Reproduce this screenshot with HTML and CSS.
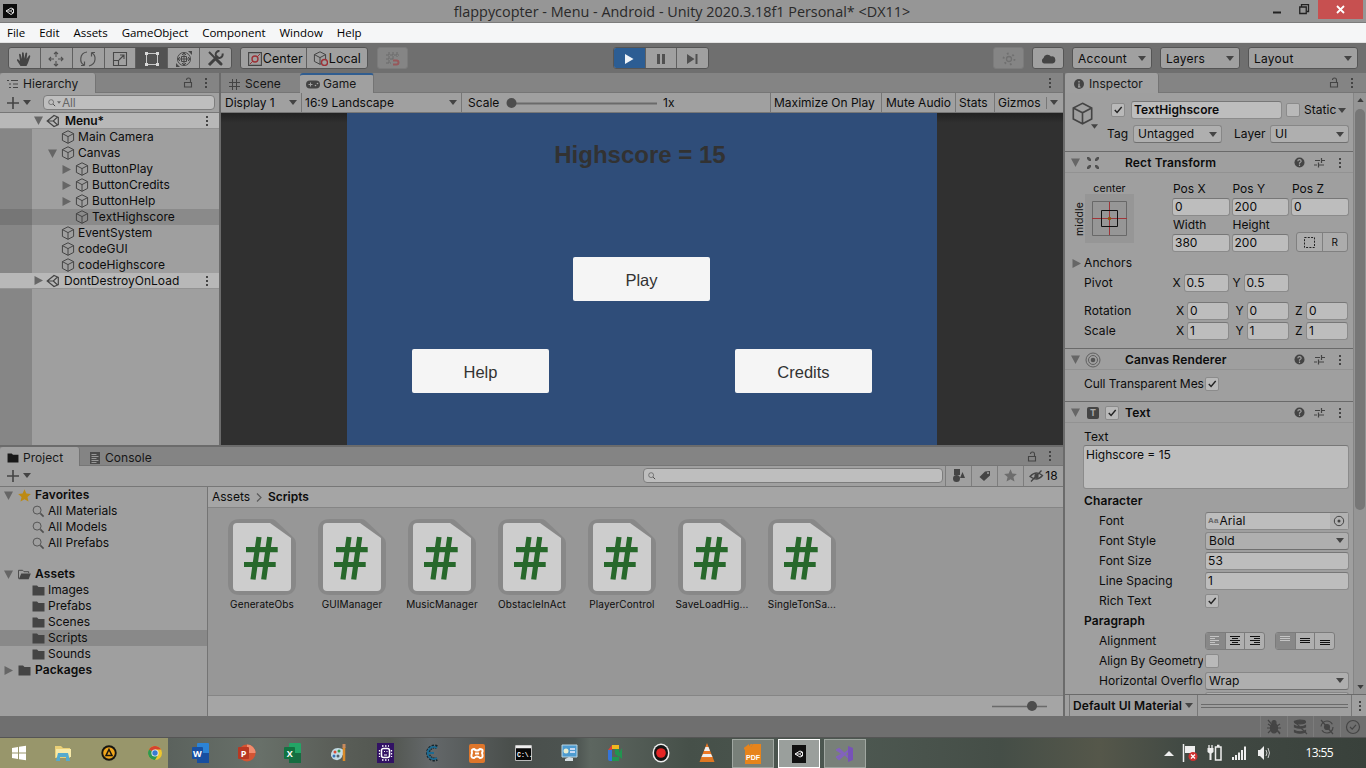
FILE: index.html
```html
<!DOCTYPE html>
<html lang="en">
<head>
<meta charset="utf-8">
<title>flappycopter - Menu - Android - Unity</title>
<link rel="stylesheet" href="styles.css">
</head>
<body>
<svg class="sprite" aria-hidden="true">
  <symbol id="cube" viewBox="0 0 14 14"><path d="M7 .8 12.6 3.6V10.400L7 13.300 1.400 10.400V3.600ZM1.400 3.600 7 6.600 12.600 3.600M7 6.600V13.300" fill="none" stroke="currentColor" stroke-width="1"/></symbol>
  <symbol id="unity" viewBox="0 0 14 14"><path d="M1.200 7 8 1.500 12.300 3.300V10.700L8 12.500ZM1.200 7H7.300L11.500 3M7.300 7 11.500 11" fill="none" stroke="currentColor" stroke-width="1.200"/></symbol>
  <symbol id="down" viewBox="0 0 8 5"><path d="M0 0H8L4 5Z" fill="currentColor"/></symbol>
  <symbol id="open" viewBox="0 0 9 9"><path d="M0 .5H9L4.500 9Z" fill="currentColor"/></symbol>
  <symbol id="shut" viewBox="0 0 9 9"><path d="M.5 0V9L9 4.500Z" fill="currentColor"/></symbol>
  <symbol id="dots" viewBox="0 0 4 12"><path d="M1 1H3V3H1ZM1 5H3V7H1ZM1 9H3V11H1Z" fill="currentColor"/></symbol>
  <symbol id="lock" viewBox="0 0 10 11"><path d="M1.500 5.500H8.500V10H1.500ZM7.500 5V3Q7.500 1 5.500 1T3.500 3" fill="none" stroke="currentColor" stroke-width="1.100"/></symbol>
  <symbol id="mag" viewBox="0 0 14 14"><circle cx="5.500" cy="5.500" r="4.300" fill="none" stroke="currentColor"/><path d="M9 9 12.500 12.500" stroke="currentColor" stroke-width="1.700"/></symbol>
  <symbol id="folder" viewBox="0 0 13 11"><path d="M.5 .5H5L6.500 2H12.500V10.500H.5Z" fill="currentColor"/></symbol>
  <symbol id="folder-open" viewBox="0 0 14 11"><path d="M.5 10V1H5L6.500 2.500H11.500V4" fill="none" stroke="currentColor"/><path d="M3.500 4.500H13.800L11.500 10.500H.8Z" fill="currentColor"/></symbol>
  <symbol id="star" viewBox="0 0 12 12"><path d="M6 .3 7.700 4.200 11.900 4.600 8.700 7.400 9.700 11.600 6 9.400 2.300 11.600 3.300 7.400 .1 4.600 4.300 4.200Z" fill="currentColor"/></symbol>
  <symbol id="check" viewBox="0 0 13 13"><path d="M3 6.500 5.500 9.200 10.500 3.200" fill="none" stroke="currentColor" stroke-width="1.500"/></symbol>
  <symbol id="help" viewBox="0 0 11 11"><circle cx="5.500" cy="5.500" r="5" fill="currentColor"/><path d="M3.800 4.300Q3.900 2.700 5.500 2.700T7.200 4.200Q7.100 5 5.500 5.900V6.700M5.500 7.500V8.900" fill="none" stroke="#a0a0a0" stroke-width="1.200"/></symbol>
  <symbol id="preset" viewBox="0 0 11 11"><path d="M1 3.500H6M8 3.500H11M7.500 1V6M0 8H3M5 8H10M4.500 5.500V10.500" fill="none" stroke="currentColor" stroke-width="1.200"/></symbol>
  <symbol id="script" viewBox="0 0 70 78"><path d="M13 1H44Q47 1 49 3L67 20Q69 22 69 25V65Q69 77 57 77H13Q1 77 1 65V13Q1 1 13 1Z" fill="#888"/><path d="M10 5H43L64 20V69Q64 73 60 73H10Q6 73 6 69V9Q6 5 10 5Z" fill="#cdcdcd"/><path d="M32 19 26 61.500M42.700 19 36.700 61.500M19 31.700H50.700M17 46.500H48.700" fill="none" stroke="#27682b" stroke-width="5.200"/></symbol>
</svg>

<header class="titlebar">
  <svg class="app-logo" viewBox="0 0 14 14"><rect width="14" height="14" fill="#0c0c0c"/><path d="M3 7 8 4 10.500 5V9L8 10.500ZM3 7H7.500L10 5M7.500 7 10 9" fill="none" stroke="#ddd"/></svg>
  <h1>flappycopter - Menu - Android - Unity 2020.3.18f1 Personal* &lt;DX11&gt;</h1>
  <div class="window-buttons">
    <svg width="9" height="12"><path d="M0 8.500H8" stroke="#222" stroke-width="2"/></svg>
    <svg width="11" height="11"><path d="M.75 3H7.250V9.500H.75ZM.5 3.200H7.500M2.500 3V.7H9.500V7.500H8" fill="none" stroke="#222" stroke-width="1.300"/></svg>
    <span class="close"><svg width="9" height="9"><path d="M1 1 8 8M8 1 1 8" stroke="#fff" stroke-width="1.800"/></svg></span>
  </div>
</header>
<nav class="menubar"><span>File</span><span>Edit</span><span>Assets</span><span>GameObject</span><span>Component</span><span>Window</span><span>Help</span></nav>

<div class="toolbar">
  <div class="group tools">
    <span class="btn"><svg width="16" height="16"><path d="M4.500 15 1 9.500Q.5 8 2 8.300L4 10 3 3.500Q3.500 2.200 4.600 3.300L6 8 6 1.800Q6.800.5 7.700 1.800L8.300 7.500 9.500 2Q10.500 1 11.200 2.200L10.600 8 13 4.500Q14.200 4 14.300 5.300L12 12 10.500 15Z" fill="#444"/></svg></span>
    <span class="btn"><svg width="18" height="18"><path d="M9 2V7M9 11V16M2 9H7M11 9H16M7 4 9 2 11 4M7 14 9 16 11 14M4 7 2 9 4 11M14 7 16 9 14 11" fill="none" stroke="#505050" stroke-width="1.100"/></svg></span>
    <span class="btn"><svg width="18" height="18"><path d="M8 2C0 3 .5 13 5 15M5.500 15.500H2M5.500 15.500V11.500M10 16C18 14 17 5 13 3M12.500 2.500H16M12.500 2.500V6.500" fill="none" stroke="#505050" stroke-width="1.200"/></svg></span>
    <span class="btn"><svg width="16" height="16"><path d="M1.500 1.500H14.500V14.500H1.500ZM1.500 9.500H6.500V14.500M7 9 12 4M8 4H12V8" fill="none" stroke="#484848" stroke-width="1.100"/></svg></span>
    <span class="btn pressed"><svg width="16" height="16"><path d="M4 2.500H12M4 13.500H12M2.500 4V12M13.500 4V12" stroke="#c8c8c8"/><path d="M1 1H4V4H1ZM12 1H15V4H12ZM1 12H4V15H1ZM12 12H15V15H12Z" fill="#d8d8d8"/></svg></span>
    <span class="btn"><svg width="18" height="18"><circle cx="9" cy="9" r="6.500" fill="none" stroke="#484848"/><path d="M9 3V15M3 9H15M7 5 9 3 11 5M7 13 9 15 11 13M5 7 3 9 5 11M13 7 15 9 13 11M6.500 6.500H11.500V11.500H6.500Z" fill="none" stroke="#484848"/><path d="M13 1H17V5ZM1 13V17H5Z" fill="#484848"/></svg></span>
    <span class="btn"><svg width="17" height="17"><path d="M2 2 15 15" stroke="#404040" stroke-width="2"/><path d="M9.500 9.500 14.500 14.500M2 15 11 6" stroke="#404040" stroke-width="3"/><path d="M15.500 3.500A3.500 3.500 0 1 1 12.500 1" fill="none" stroke="#404040" stroke-width="2"/></svg></span>
  </div>
  <div class="group pivot">
    <span class="btn"><svg width="14" height="14"><path d="M.6.600H13.400V13.400H.6Z" fill="none" stroke="#444" stroke-width="1.100"/><circle cx="7" cy="7" r="3" fill="none" stroke="#9d3036" stroke-width="1.400"/><path d="M2 12 5 9M9 5 12 2" stroke="#9d3036"/></svg>Center</span>
    <span class="btn"><svg width="15" height="15" class="cube-local"><use href="#cube" width="14" height="14"/><circle cx="11.500" cy="11.500" r="3" fill="#a0a0a0" stroke="#9d3036" stroke-width="1.400"/></svg>Local</span>
  </div>
  <div class="group snap"><span class="btn"><svg width="16" height="16"><path d="M4 1V13M8 1V8M12 1V6M1 4H14M1 8H8M1 12H6" stroke="#6a6a6a" stroke-dasharray="3 1"/><path d="M8 9.500H11.500Q13.500 9.500 13.500 11.500T11.500 13.500H8" fill="none" stroke="#97585b" stroke-width="2"/></svg></span></div>
  <div class="group playback">
    <span class="btn playing"><svg width="10" height="12"><path d="M1 1 9.500 6 1 11Z" fill="#eef3f8"/></svg></span>
    <span class="btn"><svg width="10" height="12"><path d="M1 1H4V11H1ZM6 1H9V11H6Z" fill="#505050"/></svg></span>
    <span class="btn"><svg width="11" height="12"><path d="M0 1 7.500 6 0 11ZM8.500 1H10.500V11H8.500Z" fill="#505050"/></svg></span>
  </div>
  <div class="group services"><span class="btn"><svg width="14" height="14"><circle cx="7" cy="7" r="2.500" fill="none" stroke="#707070" stroke-width="1.300"/><circle cx="7" cy="7" r="5.500" fill="none" stroke="#707070" stroke-width="1.800" stroke-dasharray="1.800 3.960"/></svg></span></div>
  <div class="group cloud"><span class="btn"><svg width="16" height="12"><path d="M4 10.500A3 3 0 0 1 3.500 5 4.200 4.200 0 0 1 11 3.500 3.500 3.500 0 0 1 12.500 10.500Z" fill="#444"/></svg></span></div>
  <div class="select top">Account<svg><use href="#down"/></svg></div>
  <div class="select top">Layers<svg><use href="#down"/></svg></div>
  <div class="select top wide">Layout<svg><use href="#down"/></svg></div>
</div>

<main class="workspace">
  <div class="left-side">
    <div class="upper">
      <section class="hierarchy">
        <div class="tabs"><div class="tab h-tab"><svg width="12" height="10"><path d="M0 1.500H2M4 1.500H11M2 5H4M6 5H11M2 8.500H4M6 8.500H11" stroke="#444" stroke-width="1.200"/></svg>Hierarchy</div><svg class="i-lock"><use href="#lock"/></svg><svg class="i-dots"><use href="#dots"/></svg></div>
        <div class="bar"><svg class="plus" viewBox="0 0 12 12"><path d="M6 0V12M0 6H12" stroke="#444" stroke-width="1.600"/></svg><svg class="i-down"><use href="#down"/></svg><div class="search h-search"><svg class="mini-mag"><use href="#mag"/></svg><svg class="tiny-down"><use href="#down"/></svg>All</div></div>
        <div class="tree">
          <div class="row scene"><svg class="fold"><use href="#open"/></svg><svg class="icon"><use href="#unity"/></svg><b>Menu*</b><svg class="i-dots"><use href="#dots"/></svg></div>
          <div class="row l1"><svg class="icon"><use href="#cube"/></svg>Main Camera</div>
          <div class="row l1"><svg class="fold"><use href="#open"/></svg><svg class="icon"><use href="#cube"/></svg>Canvas</div>
          <div class="row l2"><svg class="fold"><use href="#shut"/></svg><svg class="icon"><use href="#cube"/></svg>ButtonPlay</div>
          <div class="row l2"><svg class="fold"><use href="#shut"/></svg><svg class="icon"><use href="#cube"/></svg>ButtonCredits</div>
          <div class="row l2"><svg class="fold"><use href="#shut"/></svg><svg class="icon"><use href="#cube"/></svg>ButtonHelp</div>
          <div class="row l2 selected"><svg class="icon"><use href="#cube"/></svg>TextHighscore</div>
          <div class="row l1"><svg class="icon"><use href="#cube"/></svg>EventSystem</div>
          <div class="row l1"><svg class="icon"><use href="#cube"/></svg>codeGUI</div>
          <div class="row l1"><svg class="icon"><use href="#cube"/></svg>codeHighscore</div>
          <div class="row scene"><svg class="fold"><use href="#shut"/></svg><svg class="icon"><use href="#unity"/></svg><span>DontDestroyOnLoad</span><svg class="i-dots"><use href="#dots"/></svg></div>
        </div>
      </section>
      <section class="game">
        <div class="tabs"><div class="tab idle s-tab"><svg width="11" height="11"><path d="M3.500 0V11M7.500 0V11M0 3.500H11M0 7.500H11" stroke="#444"/></svg>Scene</div><div class="tab g-tab"><svg width="14" height="9"><rect y=".5" width="14" height="8" rx="4" fill="#444"/><path d="M2.500 4.500H6.500M4.500 2.500V6.500" stroke="#a0a0a0"/><circle cx="9.500" cy="5.500" r=".8" fill="#aaa"/><circle cx="11.500" cy="3.500" r=".8" fill="#aaa"/></svg>Game</div><svg class="i-dots"><use href="#dots"/></svg></div>
        <div class="bar game-bar">
          <div class="cell display">Display 1<svg class="i-down"><use href="#down"/></svg></div>
          <div class="cell aspect">16:9 Landscape<svg class="i-down"><use href="#down"/></svg></div>
          <div class="cell scale"><span class="scale-label">Scale</span><svg class="slider" width="151" height="12"><path d="M5 6.500H151" stroke="#6a6a6a" stroke-width="2"/><circle cx="5.500" cy="6" r="5" fill="#4d4d4d"/></svg>1x</div>
          <div class="cell max">Maximize On Play</div><div class="cell mute">Mute Audio</div><div class="cell stats">Stats</div>
          <div class="cell gizmos">Gizmos<i></i><svg class="i-down"><use href="#down"/></svg></div>
        </div>
        <div class="viewport"><div class="canvas">
          <p class="highscore">Highscore = 15</p>
          <div class="play-line"><span class="ui-button">Play</span></div>
          <div class="other-line"><span class="ui-button">Help</span><span class="ui-button">Credits</span></div>
        </div></div>
      </section>
    </div>
    <section class="project">
      <div class="tabs"><div class="tab p-tab"><svg width="12" height="10"><use href="#folder"/></svg>Project</div><div class="tab idle c-tab"><svg width="10" height="12"><path d="M0 0H10V12H0Z" fill="#4a4a4a"/><path d="M1.500 2.500H6.500M1.500 4.500H8.500M1.500 6.500H6.500M1.500 8.500H8.500M1.500 10.500H6.500" stroke="#989898"/></svg>Console</div><svg class="i-lock"><use href="#lock"/></svg><svg class="i-dots"><use href="#dots"/></svg></div>
      <div class="bar project-bar"><svg class="plus" viewBox="0 0 12 12"><path d="M6 0V12M0 6H12" stroke="#444" stroke-width="1.600"/></svg><svg class="i-down"><use href="#down"/></svg>
        <div class="search p-search"><svg class="mini-mag"><use href="#mag"/></svg></div>
        <span class="filter"><svg width="13" height="13"><path d="M2 0H8V6H2ZM8 9 10.500 3 13 9Z" fill="#444"/><circle cx="4.500" cy="9.500" r="3.500" fill="#444"/></svg></span>
        <span class="filter"><svg width="12" height="12"><path d="M6 1.500 11 1V5.500L5 11 .5 7Z" fill="#444"/><circle cx="9" cy="3" r="1" fill="#a0a0a0"/></svg></span>
        <span class="filter faded"><svg width="13" height="13"><use href="#star"/></svg></span>
        <span class="filter hidden-count"><svg width="15" height="12"><path d="M1 6.500Q7 0 13.500 5.500 8 12 1 6.500ZM2 11.500 12.500.500" fill="none" stroke="#444" stroke-width="1.300"/><circle cx="7.500" cy="6" r="2.200" fill="#444"/></svg>18</span>
      </div>
      <div class="project-body">
        <div class="folders">
          <div class="row root"><svg class="fold"><use href="#open"/></svg><svg class="icon gold"><use href="#star"/></svg><b>Favorites</b></div>
          <div class="row sub"><svg class="icon mg"><use href="#mag"/></svg>All Materials</div>
          <div class="row sub"><svg class="icon mg"><use href="#mag"/></svg>All Models</div>
          <div class="row sub"><svg class="icon mg"><use href="#mag"/></svg>All Prefabs</div>
          <div class="row root second"><svg class="fold"><use href="#open"/></svg><svg class="icon op"><use href="#folder-open"/></svg><b>Assets</b></div>
          <div class="row sub"><svg class="icon"><use href="#folder"/></svg>Images</div>
          <div class="row sub"><svg class="icon"><use href="#folder"/></svg>Prefabs</div>
          <div class="row sub"><svg class="icon"><use href="#folder"/></svg>Scenes</div>
          <div class="row sub selected"><svg class="icon"><use href="#folder"/></svg>Scripts</div>
          <div class="row sub"><svg class="icon"><use href="#folder"/></svg>Sounds</div>
          <div class="row root"><svg class="fold"><use href="#shut"/></svg><svg class="icon"><use href="#folder"/></svg><b>Packages</b></div>
        </div>
        <div class="assets">
          <div class="crumbs">Assets<svg width="6" height="9"><path d="M1 .5 5 4.500 1 8.500" fill="none" stroke="#5a5a5a" stroke-width="1.200"/></svg><b>Scripts</b></div>
          <div class="grid">
            <div class="asset"><svg><use href="#script"/></svg>GenerateObs</div>
            <div class="asset"><svg><use href="#script"/></svg>GUIManager</div>
            <div class="asset"><svg><use href="#script"/></svg>MusicManager</div>
            <div class="asset"><svg><use href="#script"/></svg>ObstacleInAct</div>
            <div class="asset"><svg><use href="#script"/></svg>PlayerControl</div>
            <div class="asset"><svg><use href="#script"/></svg>SaveLoadHig...</div>
            <div class="asset"><svg><use href="#script"/></svg>SingleTonSa...</div>
          </div>
          <div class="zoom-bar"><svg width="56" height="12"><path d="M0 6.500H55" stroke="#6a6a6a" stroke-width="1.500"/><circle cx="40" cy="6" r="5" fill="#4d4d4d"/></svg></div>
        </div>
      </div>
    </section>
  </div>

  <aside class="inspector">
    <div class="tabs"><div class="tab i-tab"><svg width="10" height="10"><circle cx="5" cy="5" r="5" fill="#444"/><path d="M5 2V3.500M5 4.500V8M4 8H6.500" stroke="#aaa" stroke-width="1.200"/></svg>Inspector</div><svg class="i-lock"><use href="#lock"/></svg><svg class="i-dots"><use href="#dots"/></svg></div>
    <div class="inspector-body">
      <div class="props">
        <div class="object-head">
          <div class="object-icon"><svg class="big-cube"><use href="#cube"/></svg><svg class="i-down"><use href="#down"/></svg></div>
          <div class="object-fields">
            <div class="line"><span class="check"><svg><use href="#check"/></svg></span><span class="field name-field"><b>TextHighscore</b></span><span class="check"></span><span class="static">Static</span><svg class="i-down"><use href="#down"/></svg></div>
            <div class="line second-line"><span class="tag-label">Tag</span><span class="select tag">Untagged<svg><use href="#down"/></svg></span><span class="layer-label">Layer</span><span class="select layer">UI<svg><use href="#down"/></svg></span></div>
          </div>
        </div>
        <div class="comp-head"><svg class="fold"><use href="#open"/></svg><svg class="comp-icon" viewBox="0 0 14 14"><path d="M1 1 3 1 5 3 5 5 3 5 1 3ZM13 1 11 1 9 3V5H11L13 3ZM1 13H3L5 11V9H3L1 11ZM13 13H11L9 11V9H11L13 11Z" fill="#505050"/></svg><span class="gap-check"></span><b>Rect Transform</b><svg class="i-help"><use href="#help"/></svg><svg class="i-preset"><use href="#preset"/></svg><svg class="i-dots"><use href="#dots"/></svg></div>
        <div class="rect">
          <div class="rect-top">
            <div class="anchor"><span class="vertical">middle</span><div class="anchor-col"><span>center</span><svg width="49" height="49"><rect width="49" height="49" fill="#969696"/><path d="M7.500 7.500H41.500V41.500H7.500Z" fill="none" stroke="#686868"/><path d="M7 24.500H42M24.500 8V41" stroke="#a03438"/><path d="M16.500 16.500H32.500V32.500H16.500Z" fill="none" stroke="#111"/><circle cx="24.500" cy="24.500" r="1.700" fill="#8c5410"/></svg></div></div>
            <div class="pos-grid">
              <label>Pos X</label><label>Pos Y</label><label>Pos Z</label>
              <span class="field">0</span><span class="field">200</span><span class="field">0</span>
              <label class="size">Width</label><label class="size">Height</label><span></span>
              <span class="field">380</span><span class="field">200</span>
              <div class="mode"><span><svg width="11" height="11"><path d="M.5.500H10.500V10.500H.5Z" fill="none" stroke="#222" stroke-dasharray="2 1.300"/></svg></span><span>R</span></div>
            </div>
          </div>
          <div class="prop-line anchors"><svg class="fold"><use href="#shut"/></svg>Anchors</div>
          <div class="prop-line"><span class="lab">Pivot</span><span class="ax">X</span><span class="field f45">0.5</span><span class="ax">Y</span><span class="field f45">0.5</span></div>
          <div class="prop-line rot"><span class="lab wide-lab">Rotation</span><span class="ax">X</span><span class="field f42">0</span><span class="ax ay">Y</span><span class="field f42">0</span><span class="ax ay">Z</span><span class="field f42">0</span></div>
          <div class="prop-line"><span class="lab wide-lab">Scale</span><span class="ax">X</span><span class="field f42">1</span><span class="ax ay">Y</span><span class="field f42">1</span><span class="ax ay">Z</span><span class="field f42">1</span></div>
        </div>
        <div class="comp-head"><svg class="fold"><use href="#open"/></svg><svg class="comp-icon wide-icon" viewBox="0 0 16 16"><g fill="none" stroke="#606060"><circle cx="8" cy="8" r="7"/><circle cx="8" cy="8" r="4.500"/></g><circle cx="8" cy="8" r="2.300" fill="#555"/></svg><span class="gap-check narrow"></span><b>Canvas Renderer</b><svg class="i-help"><use href="#help"/></svg><svg class="i-preset"><use href="#preset"/></svg><svg class="i-dots"><use href="#dots"/></svg></div>
        <div class="cull"><span class="cut">Cull Transparent Mes</span><span class="check"><svg><use href="#check"/></svg></span></div>
        <div class="comp-head"><svg class="fold"><use href="#open"/></svg><span class="t-icon">T</span><span class="check"><svg><use href="#check"/></svg></span><b class="text-title">Text</b><svg class="i-help"><use href="#help"/></svg><svg class="i-preset"><use href="#preset"/></svg><svg class="i-dots"><use href="#dots"/></svg></div>
        <div class="text-comp">
          <div class="text-label">Text</div>
          <div class="textarea">Highscore = 15</div>
          <div class="opt head"><b>Character</b></div>
          <div class="opt"><label>Font</label><span class="field full object"><small>Aa</small>Arial<svg width="18" height="16"><rect width="18" height="16" fill="#b2b2b2"/><circle cx="9" cy="8" r="4.700" fill="none" stroke="#444"/><circle cx="9" cy="8" r="1.500" fill="#444"/></svg></span></div>
          <div class="opt"><label>Font Style</label><span class="select full">Bold<svg><use href="#down"/></svg></span></div>
          <div class="opt"><label>Font Size</label><span class="field full">53</span></div>
          <div class="opt"><label>Line Spacing</label><span class="field full">1</span></div>
          <div class="opt"><label>Rich Text</label><span class="check"><svg><use href="#check"/></svg></span></div>
          <div class="opt head"><b>Paragraph</b></div>
          <div class="opt"><label>Alignment</label>
            <div class="seg"><span class="on"><svg width="10" height="10"><path d="M0 .5H9M0 2.500H5M0 4.500H9M0 6.500H5M0 8.500H9"/></svg></span><span><svg width="10" height="10"><path d="M0 .5H10M2 2.500H8M0 4.500H10M2 6.500H8M0 8.500H10"/></svg></span><span><svg width="10" height="10"><path d="M0 .5H10M4 2.500H10M0 4.500H10M4 6.500H10M0 8.500H10"/></svg></span></div>
            <div class="seg"><span class="on"><svg width="10" height="10"><path d="M0 .5H10M0 2.500H10M0 4.500H10"/></svg></span><span><svg width="10" height="10"><path d="M0 2.500H10M0 4.500H10M0 6.500H10"/></svg></span><span><svg width="10" height="10"><path d="M0 4.500H10M0 6.500H10M0 8.500H10"/></svg></span></div>
          </div>
          <div class="opt"><label class="tight">Align By Geometry</label><span class="check"></span></div>
          <div class="opt"><label>Horizontal Overflow</label><span class="select full">Wrap<svg><use href="#down"/></svg></span></div>
          <div class="opt"><label></label><span class="select full"></span></div>
        </div>
      </div>
      <div class="scrollbar"><svg class="up"><use href="#down"/></svg><div class="thumb"></div><svg><use href="#down"/></svg></div>
    </div>
    <div class="preview"><div class="material">Default UI Material<svg class="i-down"><use href="#down"/></svg></div><div class="grip"></div><div class="more"><svg class="i-dots"><use href="#dots"/></svg></div></div>
  </aside>
</main>

<div class="statusbar">
  <span><svg width="16" height="16"><ellipse cx="8" cy="9" rx="3.500" ry="5"/><circle cx="8" cy="3.500" r="2"/><path d="M2 5 5 7M14 5 11 7M1 9H15M2 14 5 11M14 14 11 11M2 1 14 15"/></svg></span>
  <span><svg width="16" height="16"><ellipse cx="8" cy="3" rx="5.500" ry="1.800"/><path d="M2.500 6.500Q8 9 13.500 6.500V8Q8 10.500 2.500 8ZM2.500 11.500Q8 14 13.500 11.500V13Q8 15.500 2.500 13ZM2 2 15 15"/></svg></span>
  <span><svg width="16" height="16"><circle cx="8" cy="8" r="6" fill="none" stroke-dasharray="15 3.850"/><circle cx="8" cy="8" r="2.500"/><path d="M2 1 14 15"/></svg></span>
  <span><svg width="16" height="16"><circle cx="8" cy="8" r="6.500" fill="none"/><path d="M5 8 7.200 10.200 11 5.800" fill="none"/></svg></span>
</div>

<footer class="taskbar">
  <div class="pinned">
    <span class="app start"><svg width="16" height="16"><path d="M1 3 7 2V7.500H1ZM8 1.800 15 .8V7.500H8ZM1 8.500H7V14L1 13ZM8 8.500H15V15.200L8 14.200Z" fill="#fff"/></svg></span>
    <span class="app"><svg width="18" height="18"><path d="M1 2H7L9 4H16V14H1Z" fill="#e9cf76"/><path d="M2 5H17V13H2Z" fill="#f6e9a8"/><path d="M4 9H14L16 17H12V13H6V17H2Z" fill="#55aacd"/></svg></span>
    <span class="app"><svg width="18" height="18"><circle cx="9" cy="9" r="7.700" fill="#171510"/><circle cx="9" cy="9" r="5.800" fill="#efa51c"/><path d="M9 5.500 12 11.500H6Z" fill="none" stroke="#171510" stroke-width="1.500"/></svg></span>
    <span class="app"><svg width="16" height="16"><circle cx="8" cy="8" r="7" fill="#eec62d"/><path d="M8 8 1.940 4.500A7 7 0 0 1 14.060 4.500H8Z" fill="#d4432f"/><path d="M8 8 1.940 4.500A7 7 0 0 0 8 15L11 10Z" fill="#2e9851"/><circle cx="8" cy="8" r="3.600" fill="#eee"/><circle cx="8" cy="8" r="2.700" fill="#397bd0"/></svg></span>
  </div>
  <span class="app"><svg width="18" height="20"><rect x="5" width="12" height="20" rx="1" fill="#2c83d6"/><path d="M5 10H17V20H5Z" fill="#174ea0"/><rect y="4" width="11" height="12" rx="1" fill="#1750a3"/><text x="1" y="13.500" class="glyph">W</text></svg></span>
  <span class="app"><svg width="18" height="20"><circle cx="9" cy="10" r="8.500" fill="#d45433"/><path d="M9 1.500A8.500 8.500 0 0 1 17.500 10H9Z" fill="#f18b6d"/><rect y="4" width="11" height="12" rx="1" fill="#b83822"/><text x="2.700" y="13.500" class="glyph">P</text></svg></span>
  <span class="app"><svg width="18" height="20"><rect x="5" width="12" height="20" rx="1" fill="#23a566"/><path d="M5 10H17V20H5Z" fill="#176c41"/><rect y="4" width="11" height="12" rx="1" fill="#127341"/><text x="2.700" y="13.500" class="glyph">X</text></svg></span>
  <span class="app"><svg width="18" height="18"><path d="M1 12Q1 4 8 4T14 10Q12 11 12 13 9 18 3 15Z" fill="#c3dbe5"/><circle cx="5" cy="8" r="1.500" fill="#d84c35"/><circle cx="9" cy="7" r="1.500" fill="#36984a"/><circle cx="4" cy="12" r="1.500" fill="#3874b8"/><circle cx="8" cy="12" r="1.500" fill="#52616a"/><path d="M14 17V3" stroke="#da8b28" stroke-width="2.500"/><path d="M14 0V4" stroke="#c88b5e" stroke-width="3"/></svg></span>
  <span class="app"><svg width="17" height="20"><path d="M0 0H17V20H0Z" fill="#321264"/><rect x="4.500" y="5.500" width="8" height="9" rx="2" fill="none" stroke="#fff" stroke-width="1.500"/><path d="M5 3H12M5 17H12M2.500 7V14M14.500 7V14" stroke="#fff" stroke-dasharray="1.500 1.500" stroke-width="1.300"/><path d="M7 8.500H8M9.500 8.500H10.500M7 12H10" stroke="#fff"/></svg></span>
  <span class="app"><svg width="20" height="20"><path d="M16 4A6.500 6.500 0 1 0 16 16" fill="none" stroke="#15242b" stroke-width="4" stroke-dasharray="2 1"/><path d="M16 5A6 6 0 1 0 16 15M7 10H13" fill="none" stroke="#1d6a91" stroke-width="2"/></svg></span>
  <span class="app"><svg width="17" height="19"><rect width="16" height="19" rx="2" fill="#df762b"/><path d="M5 5Q8 8 11 5 15 5 13 9 15 14 11 14 8 11 5 14 1 14 3 9 2 5 5 5ZM6 9.500H10" fill="none" stroke="#fff" stroke-width="2"/></svg></span>
  <span class="app"><svg width="17" height="16"><path d="M.5.500H16.500V15.500H.5Z" fill="#070707" stroke="#bbb"/><path d="M1 2H16" stroke="#eee" stroke-width="2.500"/><text x="2" y="12" class="prompt">C:\.</text></svg></span>
  <span class="app"><svg width="17" height="19"><path d="M1 1H16V13H1Z" fill="#4e9bd0" stroke="#b9d5e3"/><circle cx="5" cy="7" r="2.500" fill="#e9edcf"/><path d="M9 5H14M9 8H14" stroke="#eef" stroke-width="1.500"/><path d="M8 13 12 14V17H4V15Z" fill="#d5dde1"/></svg></span>
  <span class="app"><svg width="16" height="18"><path d="M1 6 5 1V6Z" fill="#dc4236"/><path d="M1 6H5V13H1Z" fill="#3474da"/><path d="M5 1H12V5H5Z" fill="#f0b81f"/><path d="M1 13H12V17H3Q1 17 1 15Z" fill="#3474da"/><path d="M5 13H12V17H5ZM8 5H12V9L15 4V15L12 12V13L8 10Z" fill="#229450"/></svg></span>
  <span class="app"><svg width="18" height="20"><ellipse cx="9" cy="10" rx="8.500" ry="9.500" fill="#eee"/><ellipse cx="9" cy="10" rx="7" ry="8" fill="#151515"/><circle cx="9" cy="10" r="4.800" fill="#e42525"/></svg></span>
  <span class="app"><svg width="16" height="20"><path d="M8 0 14 15H2Z" fill="#ed7824"/><path d="M6.500 4H9.500L11 8H5ZM4 11H12L13.500 14H2.500Z" fill="#eee"/><path d="M2 15H14L15.500 19H.5Z" fill="#df7722"/></svg></span>
  <span class="app running"><svg width="18" height="20"><path d="M3 3H7L9 0H17V20H1V4Z" fill="#e7841b"/><path d="M0 5 4 2 4 5 8 0" fill="none" stroke="#e7841b" stroke-width="2"/><text x="2" y="16" class="pdf">PDF</text></svg></span>
  <span class="app running focused"><svg width="14" height="18"><path d="M0 0H14V18H0Z" fill="#101010"/><path d="M3 9 8 6 10.500 7V11L8 12ZM3 9H7.500L10 7M7.500 9 10 11" fill="none" stroke="#eee"/></svg></span>
  <span class="app running"><svg width="18" height="18"><path d="M1 5 3 4 14 14V4L3 14 1 12 7 9Z" fill="none" stroke="#8262bd" stroke-width="2"/><path d="M12 1 17 3V15L12 17Z" fill="#7752b8"/></svg></span>
  <div class="tray">
    <svg width="10" height="5"><path d="M5 0 10 5H0Z" fill="#eee"/></svg>
    <svg width="16" height="18"><path d="M1.500 0V18" stroke="#eee" stroke-width="1.500"/><path d="M3 2H13V9H3Z" fill="#eee"/><circle cx="11" cy="12.500" r="4.500" fill="#cf3030"/><path d="M9 10.500 13 14.500M13 10.500 9 14.500" stroke="#fff" stroke-width="1.300"/></svg>
    <svg width="16" height="18"><path d="M2 1V4M5 1V4" stroke="#eee" stroke-width="1.300"/><path d="M.5 4H6.500V8L4.500 9.500V16H2.500V9.500L.5 8Z" fill="#eee"/><path d="M8.500 3H14V16H8.500ZM10 1.500H12.500" fill="none" stroke="#eee" stroke-width="1.500"/></svg>
    <svg width="17" height="16"><path d="M2 12V15M5 10V15M8 7.500V15M11 5V15M14 1.500V15" stroke="#eee" stroke-width="2"/></svg>
    <svg width="15" height="16"><path d="M1 5H3L7 1V15L3 11H1Z" fill="#eee"/><path d="M9 5Q11 8 9 11M11 3Q14 8 11 13" fill="none" stroke="#ccc"/></svg>
    <time>13:55</time>
  </div>
</footer>
</body>
</html>
```
FILE: styles.css
```css
* { box-sizing: border-box; }
body { margin: 0; width: 1366px; height: 768px; overflow: hidden; display: flex; flex-direction: column; background: #6b6b6b; color: #0c0c0c; font: 12px/16px Inter, "Liberation Sans", sans-serif; white-space: nowrap; letter-spacing: .1px; }
svg { display: block; flex: none; }
b { font-weight: 600; }
.sprite { position: absolute; width: 0; height: 0; }

/* window frame */
.titlebar { height: 23px; flex: none; display: flex; background: #969696; border-bottom: 1px solid #7c7c7c; }
.app-logo { width: 14px; height: 14px; margin: 4px 0 0 3px; }
.titlebar h1 { margin: 0; width: 1246px; padding-left: 84px; text-align: center; font: 14.400px/23px "Open Sans", "Noto Sans", sans-serif; color: #292929; letter-spacing: 0; }
.window-buttons { display: flex; margin-left: auto; }
.window-buttons > svg:first-child { margin: 4px 17px 0 0; }
.window-buttons > svg { margin: 4px 8px 0 0; }
.close { width: 45px; height: 19px; background: #c75050; display: flex; align-items: center; justify-content: center; margin-right: 3px; }
.menubar { height: 20px; flex: none; display: flex; gap: 14px; padding-left: 7px; background: #f5f6f7; border-bottom: 1px solid #e2e2e2; font: 11.500px/20px "Open Sans", "Noto Sans", sans-serif; color: #000; letter-spacing: -.02px; }
.toolbar { height: 30px; flex: none; display: flex; padding-top: 4px; background: #6f6f6f; }

/* toolbar controls */
.group { height: 22px; display: flex; border: 1px solid #555; border-radius: 3px; background: #a0a0a0; overflow: hidden; font-size: 12.500px; letter-spacing: 0; }
.btn { flex: 1; display: flex; align-items: center; justify-content: center; gap: 2px; border-left: 1px solid #606060; padding-top: 1px; }
.btn:first-child { border-left: 0; }
.btn.pressed { background: #525252; }
.btn.playing { background: #2c5d93; }
.tools { width: 224px; margin-left: 8px; }
.pivot { width: 128px; margin-left: 8px; }
.pivot .btn:first-child { padding-left: 4px; }
.pivot .btn { gap: 1px; }
.cube-local { color: #444; }
.snap, .services { background: #858585; border-color: #7b7b7b; }
.snap { width: 31px; margin-left: 9px; }
.playback { width: 96px; margin-left: 205px; }
.services { width: 31px; margin-left: 284px; }
.cloud { width: 32px; margin-left: 8px; }
.select { height: 18px; display: flex; align-items: center; padding: 0 4px; background: #afafaf; border: 1px solid #878787; border-bottom-color: #707070; border-radius: 3px; }
.select svg { width: 8px; height: 5px; margin-left: auto; color: #444; }
.select.top { height: 22px; width: 80px; margin-left: 8px; padding: 1px 5px 0; background: #a0a0a0; border-color: #555; font-size: 12px; letter-spacing: .25px; }
.select.top.wide { width: 110px; }

/* docked panels */
.workspace { height: 643px; flex: none; display: flex; gap: 2px; }
.left-side { width: 1063px; display: flex; flex-direction: column; gap: 2px; }
.upper { height: 372px; display: flex; gap: 2px; }
.tabs { height: 20px; flex: none; display: flex; background: #848484; border-bottom: 1px solid #767676; align-items: center; }
.tab { height: 20px; display: flex; align-items: center; gap: 5px; padding: 2px 0 0 7px; background: #a0a0a0; border-right: 1px solid #747474; border-radius: 3px 3px 0 0; margin-bottom: -1px; font-size: 12px; color: #181818; letter-spacing: .05px; }
.tab.idle { background: transparent; border-right: 0; color: #161616; }
.i-lock { width: 10px; height: 11px; color: #444; margin-left: auto; }
.i-dots { width: 4px; height: 12px; color: #444; }
.i-lock + .i-dots { margin-left: 11px; }
.i-down { width: 8px; height: 5px; color: #444; }
.fold { width: 9px; height: 9px; color: #666; }
.bar { height: 20px; flex: none; display: flex; align-items: center; background: #a0a0a0; border-bottom: 1px solid #777; }
.plus { width: 12px; height: 12px; margin: 0 4px 0 7px; }
.search { height: 15px; display: flex; align-items: center; background: #bebebe; border: 1px solid #7d7d7d; border-radius: 4px; color: #666; letter-spacing: -.2px; }
.mini-mag { width: 8px; height: 8px; margin-left: 4px; color: #444; }

.hierarchy { width: 219px; display: flex; flex-direction: column; background: #9f9f9f; }
.h-tab { width: 96px; gap: 4px; }
.hierarchy .tabs .i-dots { margin-right: 11px; }
.h-search { width: 172px; margin-left: 12px; }
.tiny-down { width: 4px; height: 3px; margin: 0 1px 0 1px; }
.tree { flex: 1; background: linear-gradient(90deg, #868686 32px, #9f9f9f 32px); }
.row { height: 16px; display: flex; align-items: center; }
.row .fold { margin-right: 4px; }
.row .icon { width: 14px; height: 14px; margin-right: 3px; color: #444; }
.row.scene { background: #b8b8b8; padding-left: 34px; border-bottom: 1px solid #939393; letter-spacing: 0; }
.row.scene .fold { margin-right: 3px; }
.row.scene .icon { margin-right: 4px; }
.row.scene b { padding-left: 1px; letter-spacing: -.1px; }
.row.scene .i-dots { margin-left: auto; margin-right: 10px; }
.row.l1, .row.l2 { letter-spacing: .05px; }
.row.l1 .icon, .row.l2 .icon { margin-right: 3.500px; }
.row.l1 { padding-left: 60.500px; }
.row.l1:has(.fold) { padding-left: 48px; }
.row.l1 .fold, .row.l2 .fold { margin-right: 3.500px; }
.row.l2 { padding-left: 62px; }
.row.l2.selected { padding-left: 74.500px; background: linear-gradient(90deg, #767676 32px, #8a8a8a 32px); }

/* game view */
.game { width: 842px; display: flex; flex-direction: column; }
.s-tab { width: 79px; padding-left: 8px; gap: 5px; }
.g-tab { width: 74px; padding: 0 0 0 6px; gap: 3px; border-top: 2px solid #305d90; }
.game .tabs .i-dots { margin: 0 11px 0 auto; }
.game-bar { letter-spacing: 0; }
.cell { height: 19px; display: flex; align-items: center; padding-left: 4px; border-right: 1px solid #777; }
.cell .i-down { margin-left: auto; margin-right: 4px; }
.display { width: 81px; }
.aspect { width: 160px; padding-left: 3px; }
.scale { width: 309px; padding-left: 6px; }
.scale-label { width: 33px; }
.slider { margin: 0 6px 0 5px; }
.max { width: 111px; padding-left: 3px; }
.mute { width: 74px; }
.stats { width: 39px; padding-left: 3px; }
.gizmos { width: 68px; padding-left: 3px; border: 0; }
.gizmos i { width: 1px; height: 12px; background: #777; margin-left: 5px; }
.gizmos .i-down { margin-right: 5px; }
.viewport { flex: 1; padding: 0 126px; background: linear-gradient(#222 0, #303030 10px); }
.canvas { height: 332px; background: #2f4d79; display: flex; flex-direction: column; font-family: "Liberation Sans", sans-serif; color: #323232; letter-spacing: 0; }
.highscore { margin: 28px 0 0; padding-right: 4px; text-align: center; font-size: 24px; line-height: 28px; font-weight: 700; }
.play-line { display: flex; justify-content: center; margin-top: 88px; padding-right: 1px; }
.other-line { display: flex; justify-content: space-between; margin: 48px 65px 0; }
.ui-button { width: 137px; height: 44px; border-radius: 2px; background: #f5f5f5; text-align: center; font-size: 16.500px; line-height: 46px; }

/* project browser */
.project { height: 269px; display: flex; flex-direction: column; background: #9f9f9f; }
.project .tabs { height: 19px; }
.p-tab { width: 80px; gap: 4px; }
.p-tab svg { width: 12px; }
.c-tab { padding-left: 10px; }
.project .tabs .i-dots { margin-right: 11px; }
.project-bar { height: 21px; padding-bottom: 1px; }
.p-search { width: 300px; margin: 0 2px 0 auto; }
.filter { width: 26px; height: 20px; display: flex; align-items: center; justify-content: center; border-left: 1px solid #7d7d7d; color: #444; }
.filter.faded { color: #6d6d6d; }
.filter.hidden-count { width: 40px; color: #0c0c0c; gap: 1px; }
.project-body { flex: 1; display: flex; min-height: 0; }
.folders { width: 208px; border-right: 1px solid #747474; }
.row.root { padding-left: 4px; }
.row.root.second { margin-top: 15px; }
.row.sub { padding-left: 32px; letter-spacing: 0; }
.row.root .icon, .row.sub .icon { width: 13px; height: 11px; }
.row.root .icon { margin: 0 4px 0 1px; }
.row.sub .icon.mg { height: 13px; color: #505050; }
.row .icon.gold { height: 13px; color: #bd8a12; }
.row.sub.selected { background: #898989; }
.assets { flex: 1; display: flex; flex-direction: column; background: #979797; }
.crumbs { height: 21px; display: flex; align-items: center; padding-left: 4px; gap: 6px; background: #a5a5a5; border-bottom: 1px solid #858585; letter-spacing: 0; }
.crumbs b { letter-spacing: -.05px; }
.grid { flex: 1; display: flex; padding: 10px 0 0 9px; }
.asset { width: 90px; display: flex; flex-direction: column; align-items: center; font-size: 10px; line-height: 17px; letter-spacing: .12px; }
.asset svg { width: 70px; height: 78px; }
.zoom-bar { height: 21px; padding: 4px 15px 0 0; display: flex; justify-content: flex-end; background: #a5a5a5; border-top: 1px solid #858585; }

/* inspector */
.inspector { width: 301px; display: flex; flex-direction: column; background: #9f9f9f; }
.i-tab { width: 94px; padding-left: 9px; }
.inspector .tabs .i-dots { margin-right: 12px; }
.inspector-body { height: 601px; display: flex; overflow: hidden; }
.props { width: 289px; height: 601px; overflow: hidden; border-right: 1px solid #858585; }
.field { height: 18px; display: flex; align-items: center; padding-left: 2px; background: #bdbdbd; border: 1px solid #8b8b8b; border-top-color: #777; border-radius: 3px; }
.check { width: 14px; height: 14px; flex: none; border: 1px solid #8b8b8b; border-radius: 2px; background: #b9b9b9; color: #222; }
.check svg { width: 12px; height: 12px; }
.object-head { height: 58px; display: flex; }
.object-icon { width: 46px; padding: 9px 0 0 6px; color: #444; }
.big-cube { width: 23px; height: 23px; }
.object-icon .i-down { margin: -1px 0 0 20px; width: 7px; }
.line { height: 18px; display: flex; align-items: center; margin-top: 8px; letter-spacing: .05px; }
.second-line { margin-top: 6px; }
.name-field { width: 151px; margin: 0 4px 0 6px; }
.static { margin: 0 2px 0 4px; }
.tag-label { width: 26px; margin-left: -4px; }
.select.tag { width: 89px; }
.layer-label { width: 36px; margin-left: 12px; }
.select.layer { width: 79px; }
.comp-head { height: 22px; display: flex; align-items: center; padding: 1px 0 0 6px; border-top: 1px solid #6a6a6a; border-bottom: 1px solid #929292; letter-spacing: .15px; }
.comp-icon { width: 14px; height: 14px; margin-left: 6px; }
.wide-icon { width: 16px; height: 16px; margin-left: 5px; }
.gap-check { width: 25px; }
.gap-check.narrow { width: 24px; }
.i-help { width: 11px; height: 11px; margin-left: auto; color: #444; }
.i-preset { width: 11px; height: 11px; margin-left: 9px; color: #444; }
.comp-head .i-dots { margin: 0 11px 0 13px; }
.rect { height: 175px; }
.rect-top { height: 80px; display: flex; }
.anchor { width: 107px; display: flex; padding-top: 7px; font-size: 11px; }
.vertical { writing-mode: vertical-rl; transform: rotate(180deg); width: 16px; height: 64px; margin: 7px 0 0 7px; text-align: center; line-height: 16px; font-size: 10.500px; }
.anchor-col { width: 49px; margin-left: -3px; text-align: center; font-size: 10.500px; }
.anchor-col span { display: block; height: 14px; line-height: 17px; }
.pos-grid { display: grid; grid-template-columns: 57.500px 57.500px 57.500px; grid-template-rows: 18px 18px 18px 18px; column-gap: 2px; padding-top: 7px; font-size: 12px; letter-spacing: 0; }
.pos-grid label { padding-left: 1px; line-height: 18px; }
.pos-grid .size { line-height: 17px; }
.mode { width: 52px; height: 20px; margin: -2px 0 0 5px; display: flex; border: 1px solid #808080; border-radius: 3px; background: #acacac; font-size: 10px; }
.mode span { flex: 1; display: flex; align-items: center; justify-content: center; }
.mode span + span { border-left: 1px solid #808080; }
.prop-line { height: 20px; display: flex; align-items: center; }
.prop-line.anchors { padding-left: 7px; gap: 3px; }
.prop-line.rot { margin-top: 8px; }
.lab { width: 88.500px; margin-left: 19px; }
.wide-lab { width: 92px; }
.ax { width: 11px; }
.ay { margin-left: 6.500px; }
.f45 { width: 45px; margin-right: 4px; }
.f42 { width: 42px; }
.cull { height: 31px; display: flex; align-items: center; padding: 0 0 3px 19px; }
.cut { width: 121px; letter-spacing: -.05px; }
.t-icon { width: 12px; height: 12px; margin: 0 6px 0 7px; background: #444; color: #aaa; border-radius: 2px; text-align: center; font-size: 9px; line-height: 12px; font-weight: 700; letter-spacing: 0; }
.text-title { margin-left: 6px; }
.text-label { height: 22px; padding: 6px 0 0 19px; }
.textarea { margin-left: 18px; width: 266px; height: 44px; padding: 1px 2px; background: #bdbdbd; border: 1px solid #8b8b8b; border-top-color: #777; border-radius: 3px; letter-spacing: 0; }
.opt { height: 20px; display: flex; align-items: center; }
.opt.head { padding-left: 19px; }
.textarea + .opt { margin-top: 2px; }
.opt label { width: 104px; margin: 0 2px 0 34px; overflow: hidden; letter-spacing: .02px; }
.opt .tight { letter-spacing: -.05px; }
.opt .field, .opt .select, .opt .seg { margin-bottom: 1px; }
.full { width: 144px; }
.select.full { padding-left: 3px; }
.object small { font: 700 8px "Liberation Sans", sans-serif; color: #666; margin-right: 1px; }
.object svg { margin-left: auto; }
.seg { display: flex; width: 60px; height: 18px; border: 1px solid #7c7c7c; border-radius: 3px; background: #afafaf; margin-right: 10px; overflow: hidden; }
.seg span { flex: 1; display: flex; align-items: center; justify-content: center; border-left: 1px solid #7c7c7c; }
.seg span:first-child { border-left: 0; }
.seg .on { background: #888; }
.seg path { stroke: #111; }
.seg .on path { stroke: #c4c4c4; }
.scrollbar { width: 12px; background: #959595; display: flex; flex-direction: column; align-items: center; padding: 5px 0; color: #3c3c3c; }
.scrollbar svg { width: 7px; height: 4px; }
.scrollbar .up { transform: rotate(180deg); }
.thumb { width: 10px; height: 401px; margin: 7px 0 auto; border-radius: 5px; background: #777; }
.preview { height: 22px; display: flex; border-top: 1px solid #6a6a6a; }
.material { width: 129px; display: flex; align-items: center; gap: 3px; margin-left: 4px; padding-left: 3px; border-left: 1px solid #777; border-right: 1px solid #777; font-weight: 600; letter-spacing: .08px; }
.grip { width: 147px; height: 4px; margin: 9px 3px; border: solid #6a6a6a; border-width: 1px 0; }
.more { display: flex; align-items: center; padding-left: 6px; border-left: 1px solid #777; }

/* status and taskbar */
.statusbar { height: 22px; flex: none; display: flex; justify-content: flex-end; background: #6f6f6f; border-bottom: 1px solid #555; }
.statusbar span { width: 26.500px; display: flex; align-items: center; justify-content: center; border-left: 1px solid #7c7c7c; }
.statusbar svg { fill: #454545; stroke: #454545; stroke-width: 1.200px; }
.taskbar { height: 30px; flex: none; display: flex; background: linear-gradient(90deg, #5b625d 168px, #687069 260px, #5b5f59 330px, #525650 390px, #64686a 430px, #4a4f4c 510px, #4c5350 575px, #5d6660 590px, #465049 690px, #4d5851 850px, #454e47 1000px, #55574a 1100px, #424a44 1180px, #39413b); }
.pinned { display: flex; width: 168px; margin-right: 12px; background: #98966b; }
.app { width: 42px; margin-right: 4px; flex: none; display: flex; align-items: center; justify-content: center; }
.app.start { width: 38px; }
.running { border: 1px solid #a0a7a1; background: #788079; height: 29px; margin-top: 1px; }
.focused { border: 1px solid #fff; background: #9a9f9c; }
.glyph { font: 700 9px "Open Sans", sans-serif; fill: #fff; letter-spacing: 0; }
.prompt { font: 700 6.500px "Liberation Mono", monospace; fill: #fff; letter-spacing: 0; }
.pdf { font: 700 7px "Liberation Sans", sans-serif; fill: #fff; letter-spacing: 0; }
.tray { margin-left: auto; display: flex; align-items: center; gap: 8.500px; padding-right: 33px; color: #fff; }
.tray time { margin-left: 25px; font: 12px/30px "Open Sans", sans-serif; letter-spacing: -.6px; }
```
